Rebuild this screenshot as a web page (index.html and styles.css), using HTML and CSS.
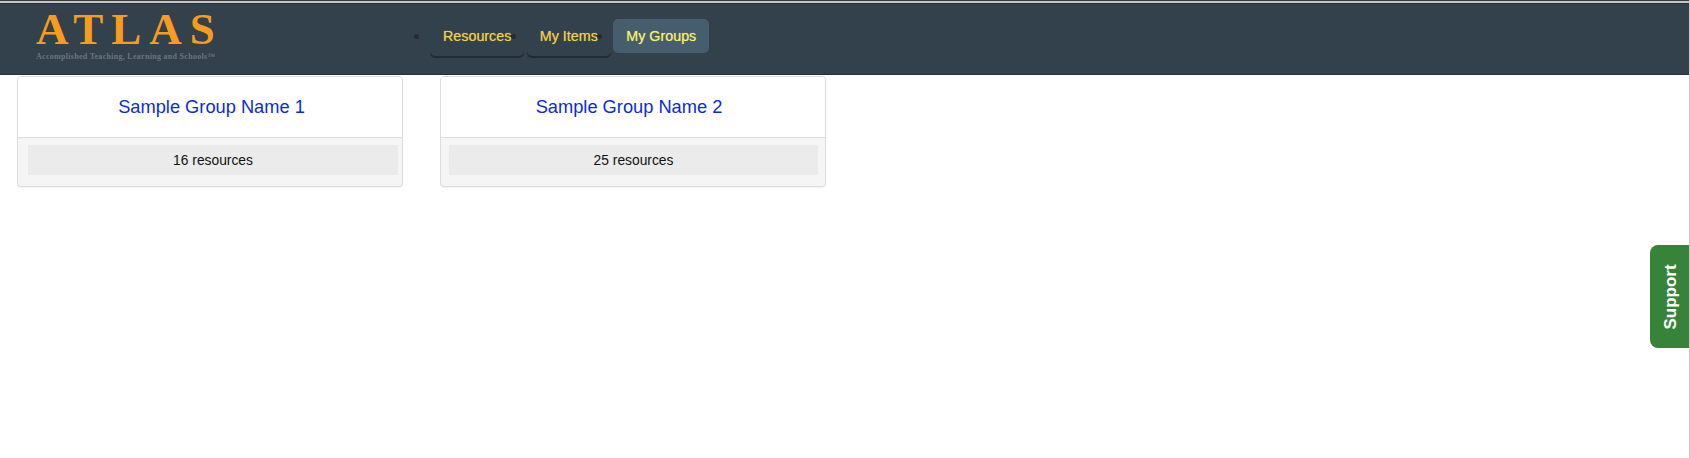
FILE: index.html
```html
<!DOCTYPE html>
<html lang="en">
<head>
<meta charset="utf-8">
<title>ATLAS - My Groups</title>
<link rel="stylesheet" href="styles.css">
</head>
<body>
<div class="topline"></div>
<header class="header">
  <a class="logo" href="#">
    <span class="logo-mark">ATLAS</span>
    <span class="logo-tag">Accomplished Teaching, Learning and Schools™</span>
  </a>
  <ul class="nav">
    <li class="nav-item"><a class="nav-link" href="#">Resources</a></li>
    <li class="nav-item"><a class="nav-link" href="#">My Items</a></li>
    <li class="nav-item"><a class="nav-link nav-link-active" href="#">My Groups</a></li>
  </ul>
</header>
<main class="groups">
  <section class="card card-first">
    <h2 class="card-title"><a href="#">Sample Group Name 1</a></h2>
    <div class="card-foot"><div class="card-count">16 resources</div></div>
  </section>
  <section class="card card-second">
    <h2 class="card-title"><a href="#">Sample Group Name 2</a></h2>
    <div class="card-foot"><div class="card-count">25 resources</div></div>
  </section>
</main>
<a class="support" href="#"><span>Support</span></a>
</body>
</html>
```
FILE: styles.css
```css
* { box-sizing: border-box; }
html, body { margin: 0; padding: 0; height: 100%; }
body {
  background: #fff;
  font-family: "Liberation Sans", Arial, sans-serif;
  overflow: hidden;
  border-right: 1px solid #c9c9c9;
}
a { text-decoration: none; }

.topline {
  height: 3px;
  background: linear-gradient(#3a3a3a 0, #3a3a3a 1px, #c4c6c8 1px);
}
.header {
  height: 72px;
  background: #33414d;
  border-top: 1px solid #27323b;
  border-bottom: 1px solid #26313a;
  display: flex;
  align-items: flex-start;
  padding-left: 36px;
}
.logo {
  width: 394px;
  flex: none;
  display: flex;
  flex-direction: column;
}
.logo-mark {
  font-family: "Liberation Serif", serif;
  font-weight: bold;
  font-size: 45px;
  line-height: 40px;
  margin-top: 5px;
  letter-spacing: 8px;
  color: #f79c1d;
}
.logo-tag {
  font-family: "Liberation Serif", serif;
  font-weight: bold;
  font-size: 8px;
  line-height: 10px;
  margin-top: 3px;
  letter-spacing: 0.29px;
  color: #69747e;
}
.nav {
  display: flex;
  margin: 15px 0 0;
  padding: 0;
  list-style: disc;
  color: #252d33;
}
.nav-item { display: list-item; margin-right: 2.5px; }
.nav-item:last-child { margin-right: 0; }
.nav-link {
  display: block;
  height: 37px;
  padding: 8px 13px 0;
  font-size: 14.3px;
  line-height: 18px;
  color: #f4cf49;
  text-shadow: 0 0 1px rgba(244, 207, 73, 0.6);
  border-radius: 5px;
  box-shadow: 0 2px 0 #232c33;
}
.nav-link-active {
  height: 34px;
  background: #455d6d;
  color: #fbf26a;
  text-shadow: 0 0 1px rgba(251, 242, 106, 0.6);
  box-shadow: none;
}

.groups {
  display: flex;
  gap: 37px;
  padding: 1px 0 0 17px;
}
.card {
  width: 386px;
  height: 111px;
  background: #f5f5f5;
  border: 1px solid #dcdcdc;
  border-radius: 4px;
  overflow: hidden;
  box-shadow: 0 1px 1px rgba(0, 0, 0, 0.05);
}
.card-title {
  margin: 0;
  height: 61px;
  background: #fff;
  border-bottom: 1px solid #dddddd;
  font-size: 18.25px;
  font-weight: normal;
  line-height: 60px;
  text-align: center;
}
.card-title a { color: #0a2be0; }
.card-first .card-title { padding-left: 3px; }
.card-second .card-title { padding-right: 8px; }
.card-foot { padding-top: 7px; }
.card-first .card-foot { padding-left: 10px; padding-right: 4px; }
.card-second .card-foot { padding-left: 8px; padding-right: 7px; }
.card-count {
  height: 30px;
  background: #ebebeb;
  font-size: 13.8px;
  line-height: 31px;
  text-align: center;
  color: #111;
}

.support {
  position: absolute;
  right: 1px;
  top: 245px;
  width: 39px;
  height: 103px;
  padding-left: 3px;
  background: #37833a;
  border-radius: 8px 0 0 8px;
  display: flex;
  align-items: center;
  justify-content: center;
}
.support span {
  transform: rotate(-90deg);
  color: #fff;
  font-size: 17px;
  font-weight: bold;
}
```
